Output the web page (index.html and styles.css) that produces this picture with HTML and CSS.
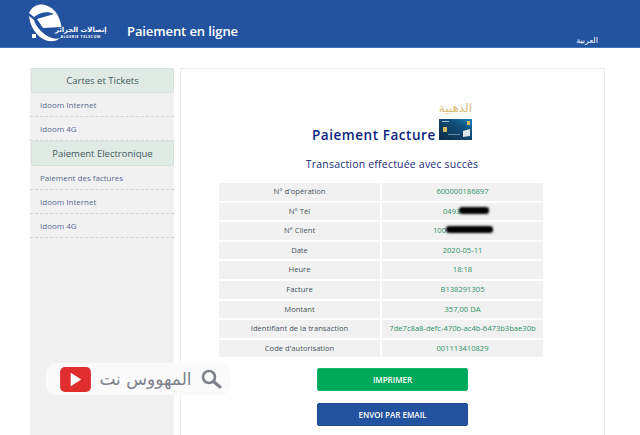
FILE: index.html
```html
<!DOCTYPE html>
<html lang="fr">
<head>
<meta charset="utf-8">
<title>Paiement en ligne</title>
<link rel="stylesheet" href="styles.css">
</head>
<body>
<header class="topbar">
  <div class="brand">
    <svg class="globe" width="36" height="40" viewBox="0 0 36 40" aria-hidden="true">
      <path fill="#fff" d="M0 10C3 3 9 1 14 1.500 24 3 31 12 32.500 24L14 25l-6-9 17-5C19 8 11 9 5 14z"/>
      <path fill="#fff" d="M0 13l5 4c2 7 9 15 18 18 3 1 6 1 8 0-4 4-10 4-15 2C7 33 1 23 0 13z"/>
      <rect fill="#fff" x="3" y="31" width="4" height="4"/>
    </svg>
    <div class="brand-text">
      <span class="brand-ar">إتصالات الجزائر</span>
      <span class="brand-en">ALGERIE TELECOM</span>
    </div>
  </div>
  <h1 class="title">Paiement en ligne</h1>
  <a class="lang">العربية</a>
</header>
<div class="content">
  <aside class="sidebar">
    <div class="side-head">Cartes et Tickets</div>
    <a class="side-link">Idoom Internet</a>
    <a class="side-link">Idoom 4G</a>
    <div class="side-head">Paiement Electronique</div>
    <a class="side-link">Paiement des factures</a>
    <a class="side-link">Idoom Internet</a>
    <a class="side-link">Idoom 4G</a>
  </aside>
  <main class="panel">
    <div class="heading">
      <div class="heading-main">
        <h2 class="pay-title">Paiement Facture</h2>
        <div class="card-block">
          <span class="gold">الذهبية</span>
          <svg class="card" width="33" height="21" viewBox="0 0 33 21" aria-hidden="true">
            <defs><linearGradient id="cg" x1="0" y1="1" x2="1" y2="0"><stop offset="0" stop-color="#0c2a45"/><stop offset=".65" stop-color="#124f7c"/><stop offset="1" stop-color="#1a86bd"/></linearGradient></defs>
            <rect width="33" height="21" fill="url(#cg)"/>
            <rect x="4" y="8" width="4" height="5" fill="#d9bb62"/>
            <path d="M24 12l7-2v7l-7 1z" fill="#dfe6ea"/>
            <rect x="28" y="2" width="3" height="4" fill="#d9bb62"/>
            <rect x="3" y="2" width="7" height="1" fill="#9fc4d8"/>
            <rect x="9" y="15" width="12" height="1" fill="#5b88a3"/>
          </svg>
        </div>
      </div>
      <p class="status">Transaction effectuée avec succès</p>
    </div>
    <div class="details">
      <div class="lbl">N° d'opération</div><div class="val">600000186897</div>
      <div class="lbl">N° Tél</div><div class="val"><span class="masked masked-a">0493<i class="blot blot-a"></i></span></div>
      <div class="lbl">N° Client</div><div class="val"><span class="masked masked-b">100<i class="blot blot-b"></i></span></div>
      <div class="lbl">Date</div><div class="val">2020-05-11</div>
      <div class="lbl">Heure</div><div class="val">18:18</div>
      <div class="lbl">Facture</div><div class="val">B138291305</div>
      <div class="lbl">Montant</div><div class="val">357,00 DA</div>
      <div class="lbl">Identifiant de la transaction</div><div class="val">7de7c8a8-defc-470b-ac4b-6473b3bae30b</div>
      <div class="lbl">Code d'autorisation</div><div class="val">001113410829</div>
    </div>
    <div class="actions">
      <button class="btn btn-green">IMPRIMER</button>
      <button class="btn btn-blue">ENVOI PAR EMAIL</button>
    </div>
  </main>
</div>
<div class="badge">
  <svg width="31" height="25" viewBox="0 0 32 26" aria-hidden="true">
    <rect width="32" height="26" rx="5" fill="#e02d2d"/>
    <path d="M11 6l11 7-11 7z" fill="#fff"/>
  </svg>
  <span class="badge-text">المهووس نت</span>
  <svg width="22" height="22" viewBox="0 0 22 22" aria-hidden="true">
    <circle cx="9" cy="9" r="6" fill="none" stroke="#7d8189" stroke-width="2.6"/>
    <path d="M13.5 13.5L20 19" stroke="#7d8189" stroke-width="3" stroke-linecap="round"/>
  </svg>
</div>
</body>
</html>
```
FILE: styles.css
```css
* { box-sizing: border-box; }
html, body { margin: 0; height: 435px; overflow: hidden; background: #fff; }
body { font-family: "Open Sans", "Noto Sans", "DejaVu Sans", sans-serif; position: relative; }
.topbar { height: 48px; background: #23539f; border-bottom: 1px solid #3b74bd; display: flex; align-items: flex-start; padding-left: 29px; color: #fff; position: relative; }
.brand { display: flex; align-items: flex-start; width: 98px; height: 47px; padding-top: 3px; }
.globe { flex: none; }
.brand-text { display: flex; flex-direction: column; align-items: center; margin: 24px 0 0 -10px; line-height: 1; }
.brand-ar { font-family: "DejaVu Sans", sans-serif; font-size: 6.8px; white-space: nowrap; font-weight: bold; }
.brand-en { font-size: 3.5px; font-weight: 700; letter-spacing: .6px; white-space: nowrap; margin-top: 1px; }
.title { margin: 22px 0 0; font-size: 13px; font-weight: 600; line-height: 18px; letter-spacing: -.1px; }
.lang { position: absolute; right: 42px; top: 36px; font-family: "DejaVu Sans", sans-serif; font-size: 8px; line-height: 10px; color: #fff; }
.content { display: flex; align-items: flex-start; padding: 20px 35px 0 30px; gap: 6px; height: 387px; }
.sidebar { width: 144px; height: 367px; background: #f1f1f1; flex: none; }
.side-head { height: 25px; background: #dfebe4; border: 1px solid #d5e3db; border-radius: 2px; margin-left: 1px; color: #3f5a5f; font-size: 9.5px; text-align: center; line-height: 23px; }
.side-link { display: block; height: 24px; padding-left: 10px; font-size: 8px; line-height: 24px; color: #5c6a96; border-bottom: 1px dashed #d4d4d4; }
.panel { flex: 1; height: 367px; border: 1px solid #ececec; border-bottom: 0; background: #fff; padding-left: 38px; }
.heading { width: 324px; display: flex; flex-direction: column; align-items: center; padding: 31px 0 0 22px; }
.heading-main { display: flex; align-items: flex-end; }
.pay-title { margin: 0 3px 0 0; font-size: 13.5px; line-height: 17px; font-weight: 600; color: #0a1f7f; letter-spacing: .55px; white-space: nowrap; }
.card-block { display: flex; flex-direction: column; align-items: flex-end; }
.gold { font-family: "DejaVu Sans", sans-serif; font-size: 12px; line-height: 14px; color: #dcbc72; margin: 1px 0 4px; }
.card { display: block; margin-bottom: 4px; }
.status { margin: 13px 0 0 -22px; font-size: 10.5px; line-height: 14px; color: #152a78; letter-spacing: .2px; white-space: nowrap; transform: translateX(11px); }
.details { display: grid; grid-template-columns: 161px 161px; column-gap: 2px; row-gap: 2px; width: 324px; margin-top: 12px; grid-auto-rows: 17.6px; }
.lbl, .val { background: #f1f1f1; font-size: 7.6px; line-height: 17.6px; text-align: center; white-space: nowrap; }
.lbl { color: #47535f; }
.val { color: #2c9469; }
.masked { position: relative; display: inline-block; text-align: left; }
.masked-a { width: 39px; }
.masked-b { width: 59px; }
.blot { position: absolute; top: 4px; height: 7px; background: #000; border-radius: 3px; filter: blur(1px); }
.blot-a { left: 16px; width: 30px; }
.blot-b { left: 13px; width: 47px; }
.actions { width: 324px; display: flex; flex-direction: column; align-items: center; gap: 12px; margin-top: 11px; padding-left: 23px; }
.btn { width: 151px; height: 23px; border: 1px solid transparent; border-radius: 2px; font: 600 8px/1 "Open Sans", "Noto Sans", sans-serif; color: #fff; padding: 0; }
.btn-green { background: #00a85a; border-color: #14b36a; }
.btn-blue { background: #23539f; border-color: #1c4a90; }
.badge { position: absolute; left: 46px; top: 363px; width: 185px; height: 32px; background: #fafafa; border-radius: 11px; display: flex; align-items: center; justify-content: space-between; padding: 0 9px 0 14px; }
.badge-text { font-family: "DejaVu Sans", sans-serif; font-size: 17px; line-height: 20px; color: #7d8189; white-space: nowrap; }
```
